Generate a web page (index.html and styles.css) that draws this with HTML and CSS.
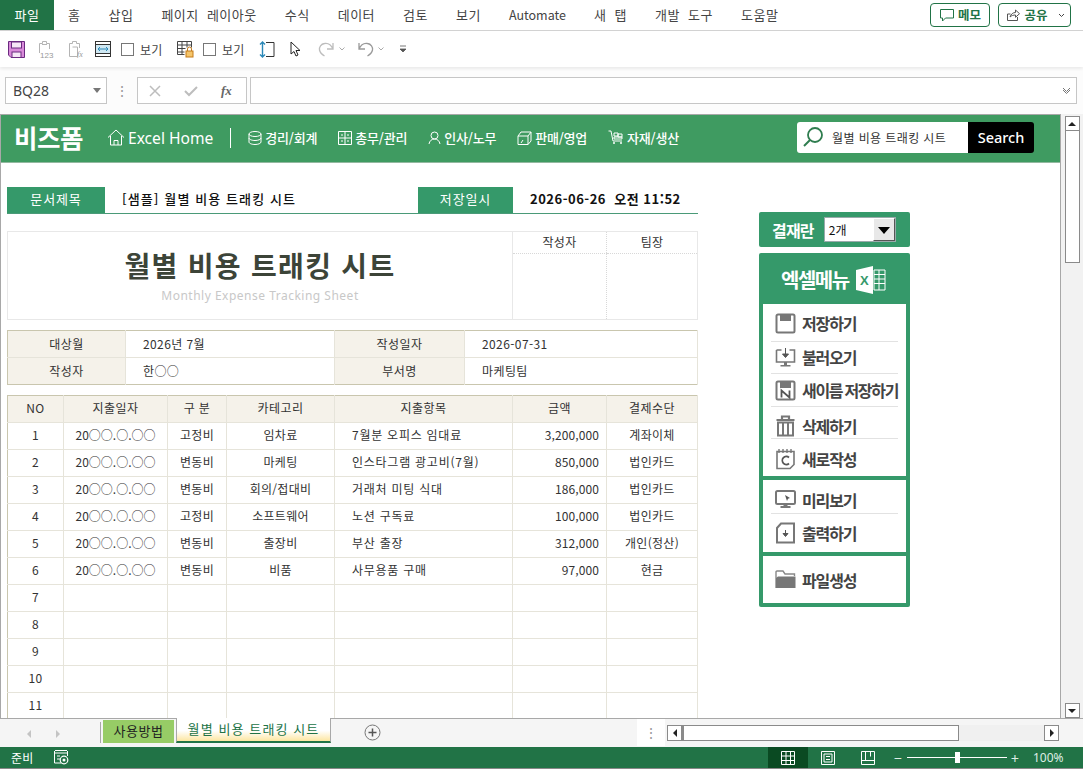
FILE: index.html
```html
<!DOCTYPE html>
<html lang="ko">
<head>
<meta charset="utf-8">
<title>월별 비용 트래킹 시트</title>
<link rel="stylesheet" href="styles.css">
</head>
<body>
<div class="app">
  <nav class="ribbon">
    <span class="tab tab-file">파일</span>
    <span class="tab">홈</span>
    <span class="tab">삽입</span>
    <span class="tab">페이지 레이아웃</span>
    <span class="tab">수식</span>
    <span class="tab">데이터</span>
    <span class="tab">검토</span>
    <span class="tab">보기</span>
    <span class="tab tab-en">Automate</span>
    <span class="tab">새 탭</span>
    <span class="tab">개발 도구</span>
    <span class="tab">도움말</span>
    <span class="ribbon-actions">
      <span class="act act-memo"><svg width="16" height="14" viewBox="0 0 16 14"><path d="M1.5 1.5h13v8.500h-8l-3 3v-3h-2z" fill="none" stroke="#217346"/></svg>메모</span>
      <span class="act act-share"><svg width="15" height="14" viewBox="0 0 15 14"><path d="M1.5 6v6.500h10V9M1.500 6h3M4 9c1-3 3-4.500 5.500-4.500V2l4 3.700-4 3.600V7C7.500 7 5.500 7.500 4 9z" fill="none" stroke="#555"/></svg>공유<svg class="act-chev" width="7" height="5" viewBox="0 0 7 5"><path d="M1 1l2.500 2.500L6 1" fill="none" stroke="#444"/></svg></span>
    </span>
  </nav>

  <div class="qat">
    <svg class="q q-save" width="17" height="17" viewBox="0 0 17 17"><path d="M.5.500h16v16H3l-2.500-2.500z" fill="#d98ad9" stroke="#6a2a80"/><rect x="3.500" y="1" width="10" height="6" fill="#f6e6f6" stroke="#6a2a80"/><rect x="4" y="11" width="9" height="5.500" fill="#f6e6f6" stroke="#6a2a80"/></svg>
    <svg class="q q-p1" width="16" height="18" viewBox="0 0 16 18"><path d="M1.500 13V3.500h3V1.500h4v2h3V9M4 4.500h5" fill="none" stroke="#b4b4b4"/><text x="2" y="17.500" class="q-mini">123</text></svg>
    <svg class="q q-p2" width="16" height="18" viewBox="0 0 16 18"><path d="M1.500 16.500V3.500h3V1.500h4v2h3V8M4.500 7h5v9.500h-8" fill="none" stroke="#b4b4b4"/><text x="9" y="17" class="q-mini q-fx">fx</text></svg>
    <svg class="q q-col" width="16" height="16" viewBox="0 0 16 16"><rect x=".5" y=".5" width="15" height="15" fill="#fff" stroke="#333"/><path d="M0 3.500h16M0 12.500h16" stroke="#333"/><rect x="1" y="4" width="14" height="8" fill="#cfe8f3"/><path d="M3 8h10M3 8l2-2M3 8l2 2M13 8l-2-2M13 8l-2 2" stroke="#2b88b8" fill="none"/></svg>
    <span class="chk chk-1"></span><span class="q-label">보기</span>
    <svg class="q q-lock" width="17" height="18" viewBox="0 0 17 18"><path d="M.5 1.500h14v6M.5 1.500v13h7M.5 5h14M.5 8.500h8M.5 12h7M5 1.500v13M10 1.500v6" fill="none" stroke="#444"/><rect x="9" y="11" width="7" height="6" fill="#f5c56a" stroke="#c47a18"/><path d="M10.500 11V9a2 2 0 0 1 4 0v2" fill="none" stroke="#c47a18"/></svg>
    <span class="chk chk-2"></span><span class="q-label">보기</span>
    <svg class="q q-row" width="16" height="17" viewBox="0 0 16 17"><path d="M7 1.500h8v14H7" fill="none" stroke="#333"/><path d="M3.500 1v15M1 3.500l2.500-2.500 2.500 2.500M1 13.500l2.500 2.500 2.500-2.500" fill="none" stroke="#2b88b8" stroke-width="1.400"/></svg>
    <svg class="q q-cur" width="11" height="16" viewBox="0 0 11 16"><path d="M1 1v12l3-2.500 2 4.500 2-1-2-4.500h4z" fill="#fff" stroke="#222"/></svg>
    <svg class="q q-redo" width="17" height="17" viewBox="0 0 17 17"><path d="M15 2v6H9M15 8C13 3.500 9.500 2 6.500 2.500 3 3 1 6 1.500 9c.5 2.500 2.500 4.500 5 6" fill="none" stroke="#bdbdbd" stroke-width="1.300"/></svg>
    <svg class="q q-c1" width="6" height="4" viewBox="0 0 6 4"><path d="M.5.500L3 3 5.500.500" fill="none" stroke="#aaa"/></svg>
    <svg class="q q-undo" width="17" height="17" viewBox="0 0 17 17"><path d="M2 2v6h6M2 8C4 3.500 7.500 2 10.500 2.500 14 3 16 6 15.500 9c-.5 2.500-2.500 4.500-5 6" fill="none" stroke="#9a9a9a" stroke-width="1.300"/></svg>
    <svg class="q q-c2" width="6" height="4" viewBox="0 0 6 4"><path d="M.5.500L3 3 5.500.500" fill="none" stroke="#aaa"/></svg>
    <svg class="q q-more" width="8" height="8" viewBox="0 0 8 8"><path d="M1 1h6M1 4l3 3 3-3z" fill="#555" stroke="#555" stroke-width=".8"/></svg>
  </div>

  <div class="formula">
    <div class="namebox"><span>BQ28</span><i class="tri"></i></div>
    <span class="dots">⋮</span>
    <div class="fbtns">
      <svg width="12" height="12" viewBox="0 0 12 12"><path d="M1 1l10 10M11 1L1 11" stroke="#bdbdbd" stroke-width="1.500"/></svg>
      <svg width="14" height="12" viewBox="0 0 14 12"><path d="M1 6l4 4 8-8" fill="none" stroke="#bdbdbd" stroke-width="2"/></svg>
      <span class="fx">fx</span>
    </div>
    <div class="finput"><svg width="9" height="7" viewBox="0 0 9 7"><path d="M1 1l3.500 3.500L8 1M1 3l3.500 3.500L8 3" fill="none" stroke="#777"/></svg></div>
  </div>

  <div class="workspace">
    <div class="sheet">
      <header class="banner">
        <span class="logo">비즈폼</span>
        <span class="b-home"><svg width="18" height="17" viewBox="0 0 18 17"><path d="M1 8.500L9 1l8 7.500M3.500 7v9h11V7M7 16v-4.500h4V16" fill="none" stroke="#fff"/></svg>Excel Home</span>
        <span class="b-sep"></span>
        <span class="b-item b-wide"><svg width="14" height="14" viewBox="0 0 14 14"><ellipse cx="7" cy="3" rx="6" ry="2.500" fill="none" stroke="#fff"/><path d="M1 3v8c0 1.500 3 2.500 6 2.500s6-1 6-2.500V3M1 7c0 1.500 3 2.500 6 2.500S13 8.500 13 7" fill="none" stroke="#fff"/></svg>경리/회계</span>
        <span class="b-item b-wide"><svg width="14" height="14" viewBox="0 0 14 14"><path d="M.5.500h13v13H.5zM7 .500v13M.5 7h13M3 4h2M9 4h2M3 10h2M9 10h2" fill="none" stroke="#fff"/></svg>총무/관리</span>
        <span class="b-item b-wide"><svg width="13" height="14" viewBox="0 0 13 14"><circle cx="6.500" cy="4.500" r="3.500" fill="none" stroke="#fff"/><path d="M1 13c.5-3 2.500-5 5.500-5s5 2 5.500 5" fill="none" stroke="#fff"/></svg>인사/노무</span>
        <span class="b-item b-wide"><svg width="15" height="14" viewBox="0 0 15 14"><path d="M1 5h10v8.500H1zM1 5l3-4h10v9l-3 3.500M11 5l3-4M6 9l-2 3" fill="none" stroke="#fff"/></svg>판매/영업</span>
        <span class="b-item"><svg width="16" height="15" viewBox="0 0 16 15"><path d="M.5 1H3l2 10h9M6 3h4v3H6zM10 4h4v3h-4zM6 7h8v2H6z" fill="none" stroke="#fff"/><circle cx="6" cy="13" r="1" fill="#fff"/><circle cx="13" cy="13" r="1" fill="#fff"/></svg>자재/생산</span>
        <div class="search">
          <div class="search-box"><svg width="22" height="22" viewBox="0 0 22 22"><circle cx="13" cy="9" r="7" fill="none" stroke="#2f7d4f" stroke-width="1.800"/><path d="M8 14l-6 6" stroke="#2f7d4f" stroke-width="2"/></svg><span>월별 비용 트래킹 시트</span></div>
          <div class="search-btn">Search</div>
        </div>
      </header>

      <div class="sheet-body">
        <main class="doc">
          <div class="docbar">
            <span class="doc-label">문서제목</span>
            <span class="doc-title">[샘플] 월별 비용 트래킹 시트</span>
            <span class="doc-label doc-label-2">저장일시</span>
            <span class="doc-date">2026-06-26&nbsp; 오전 11:52</span>
          </div>

          <table class="titlebox">
            <colgroup><col class="c-a"><col class="c-g"><col class="c-h"></colgroup>
            <tr class="t-head">
              <td rowspan="2" class="t-main">
                <div class="t-title">월별 비용 트래킹 시트</div>
                <div class="t-sub">Monthly Expense Tracking Sheet</div>
              </td>
              <td class="sign">작성자</td>
              <td class="sign">팀장</td>
            </tr>
            <tr class="t-sign"><td></td><td></td></tr>
          </table>

          <table class="info">
            <colgroup><col class="i-1"><col class="i-2"><col class="i-3"><col></colgroup>
            <tr><th>대상월</th><td>2026년 7월</td><th>작성일자</th><td>2026-07-31</td></tr>
            <tr><th>작성자</th><td>한○○</td><th>부서명</th><td>마케팅팀</td></tr>
          </table>

          <table class="list">
            <colgroup><col class="l-1"><col class="l-2"><col class="l-3"><col class="l-4"><col class="l-5"><col class="l-6"><col></colgroup>
            <thead>
              <tr><th>NO</th><th>지출일자</th><th>구 분</th><th>카테고리</th><th>지출항목</th><th>금액</th><th>결제수단</th></tr>
            </thead>
            <tbody>
              <tr><td>1</td><td>20○○.○.○○</td><td>고정비</td><td>임차료</td><td class="item">7월분 오피스 임대료</td><td class="amt">3,200,000</td><td>계좌이체</td></tr>
              <tr><td>2</td><td>20○○.○.○○</td><td>변동비</td><td>마케팅</td><td class="item">인스타그램 광고비(7월)</td><td class="amt">850,000</td><td>법인카드</td></tr>
              <tr><td>3</td><td>20○○.○.○○</td><td>변동비</td><td>회의/접대비</td><td class="item">거래처 미팅 식대</td><td class="amt">186,000</td><td>법인카드</td></tr>
              <tr><td>4</td><td>20○○.○.○○</td><td>고정비</td><td>소프트웨어</td><td class="item">노션 구독료</td><td class="amt">100,000</td><td>법인카드</td></tr>
              <tr><td>5</td><td>20○○.○.○○</td><td>변동비</td><td>출장비</td><td class="item">부산 출장</td><td class="amt">312,000</td><td>개인(정산)</td></tr>
              <tr><td>6</td><td>20○○.○.○○</td><td>변동비</td><td>비품</td><td class="item">사무용품 구매</td><td class="amt">97,000</td><td>현금</td></tr>
              <tr><td>7</td><td></td><td></td><td></td><td></td><td></td><td></td></tr>
              <tr><td>8</td><td></td><td></td><td></td><td></td><td></td><td></td></tr>
              <tr><td>9</td><td></td><td></td><td></td><td></td><td></td><td></td></tr>
              <tr><td>10</td><td></td><td></td><td></td><td></td><td></td><td></td></tr>
              <tr><td>11</td><td></td><td></td><td></td><td></td><td></td><td></td></tr>
            </tbody>
          </table>
        </main>

        <aside class="side">
          <div class="approve">
            <span>결재란</span>
            <div class="combo"><span>2개</span><i class="combo-btn"></i></div>
          </div>
          <div class="menu">
            <div class="menu-head">
              <span>엑셀메뉴</span>
              <svg width="30" height="28" viewBox="0 0 30 28"><path d="M0 4L17 0v28L0 24z" fill="#fff"/><path d="M18 4h11v20H18z" fill="none" stroke="#fff"/><path d="M18 8.500h11M18 13h11M18 17.500h11M23 4v20" stroke="#fff" fill="none"/><text x="4" y="19" class="xl">X</text></svg>
            </div>
            <div class="panel panel-a">
              <div class="mi"><svg width="21" height="21" viewBox="0 0 21 21"><path d="M1.500 3a1.500 1.500 0 0 1 1.500-1.500h15A1.500 1.500 0 0 1 19.500 3v15a1.500 1.500 0 0 1-1.500 1.500H3A1.500 1.500 0 0 1 1.500 18z" fill="none" stroke="#777" stroke-width="2"/><rect x="5" y="2" width="11" height="6" fill="#777"/></svg>저장하기</div>
              <div class="mi"><svg width="21" height="21" viewBox="0 0 21 21"><path d="M1.500 3h5M14.500 3h5v12h-18V3" fill="none" stroke="#777" stroke-width="1.600"/><path d="M10.500 1v9M7.500 7l3 3.500 3-3.500z" fill="#555" stroke="#555"/><path d="M9 15v3H5.500v1.500h10V18H12v-3z" fill="#777"/></svg>불러오기</div>
              <div class="mi"><svg width="21" height="21" viewBox="0 0 21 21"><rect x="1.500" y="1.500" width="18" height="18" rx="1.500" fill="none" stroke="#777" stroke-width="2"/><rect x="5" y="2" width="11" height="6" fill="#777"/><path d="M6.500 17.500v-7l8 7v-7" fill="none" stroke="#555" stroke-width="1.800"/></svg><span class="mi-long">새이름 저장하기</span></div>
              <div class="mi"><svg width="21" height="22" viewBox="0 0 21 22"><path d="M7 4V1.500h7V4M1.500 5h18" fill="none" stroke="#777" stroke-width="2.200"/><rect x="3" y="7.500" width="15" height="13" fill="none" stroke="#777" stroke-width="2"/><path d="M8 8v12M13 8v12" stroke="#777" stroke-width="2"/></svg>삭제하기</div>
              <div class="mi"><svg width="21" height="22" viewBox="0 0 21 22"><path d="M2 3.500h17v13l-4 4H2z" fill="none" stroke="#777" stroke-width="1.600"/><path d="M4 1v4M8 1v4M12 1v4M16 1v4" stroke="#777" stroke-width="1.400"/><path d="M14 9.500a4 4 0 1 0 0 6" fill="none" stroke="#555" stroke-width="1.800"/></svg>새로작성</div>
            </div>
            <div class="panel panel-b">
              <div class="mi"><svg width="21" height="19" viewBox="0 0 21 19"><rect x="1" y="1" width="19" height="13" rx="1.500" fill="none" stroke="#777" stroke-width="2"/><path d="M10 5l5 3-2 .8L12 11z" fill="#555"/><path d="M8.500 14h4v2h3v2h-10v-2h3z" fill="#777"/></svg>미리보기</div>
              <div class="mi"><svg width="21" height="22" viewBox="0 0 21 22"><path d="M6 1.500h13v19H2V6z" fill="none" stroke="#777" stroke-width="2"/><path d="M10.500 8v6M8 11.500l2.500 3 2.500-3z" fill="#555" stroke="#555"/></svg>출력하기</div>
            </div>
            <div class="panel panel-c">
              <div class="mi"><svg width="21" height="19" viewBox="0 0 21 19"><path d="M1 18V2a1 1 0 0 1 1-1h6l2 3h9.500v2" fill="none" stroke="#888" stroke-width="1.400"/><path d="M3 6.500h17.500V18H1V8z" fill="#777"/></svg>파일생성</div>
            </div>
          </div>
        </aside>
      </div>
    </div>

    <div class="vscroll">
      <span class="sb-btn"><i class="arr-up"></i></span>
      <span class="sb-thumb"></span>
      <span class="sb-track"></span>
      <span class="sb-btn"><i class="arr-down"></i></span>
    </div>
  </div>

  <div class="tabsbar">
    <i class="nav-l"></i><i class="nav-r"></i>
    <span class="tb-line"></span>
    <span class="stab stab-use">사용방법</span>
    <span class="stab stab-cur">월별 비용 트래킹 시트</span>
    <svg class="addsheet" width="17" height="17" viewBox="0 0 17 17"><circle cx="8.500" cy="8.500" r="7.500" fill="none" stroke="#777"/><path d="M8.500 4.500v8M4.500 8.500h8" stroke="#555" stroke-width="1.500"/></svg>
    <span class="tb-gap"><span class="tb-dots">⋮</span></span>
    <div class="hscroll">
      <span class="hs-btn"><i class="arr-left"></i></span>
      <span class="hs-thumb"></span>
      <span class="hs-track"></span>
      <span class="hs-btn"><i class="arr-right"></i></span>
    </div>
  </div>

  <footer class="status">
    <span class="st-ready">준비</span>
    <svg class="st-macro" width="15" height="15" viewBox="0 0 15 15"><path d="M1 .500h12M.500 1v12h7M1 3h12M13.500 1v5M3 6h3M3 9h3" fill="none" stroke="#fff"/><circle cx="10" cy="10" r="3.800" fill="none" stroke="#fff" stroke-width="1.200"/><circle cx="10" cy="10" r="1.500" fill="#fff"/></svg>
    <div class="views">
      <span class="view view-on"><svg width="14" height="14" viewBox="0 0 14 14"><path d="M.5.500h13v13H.5zM.5 5h13M.5 9.500h13M5 .500v13M9.500 .500v13" fill="none" stroke="#fff"/></svg></span>
      <span class="view"><svg width="14" height="14" viewBox="0 0 14 14"><path d="M.5.500h13v13H.5zM3 3h8v8H3zM5 5.500h4M5 8.500h4" fill="none" stroke="#fff"/></svg></span>
      <span class="view"><svg width="14" height="14" viewBox="0 0 14 14"><path d="M.5.500h13v13H.5zM.5 9.500h13M4.500 .500v9M9.500 .500v5" fill="none" stroke="#fff"/></svg></span>
    </div>
    <div class="zoom">
      <span class="z-sign">−</span>
      <span class="z-track"><i class="z-knob"></i></span>
      <span class="z-sign">+</span>
      <span class="z-val">100%</span>
    </div>
  </footer>
</div>
</body>
</html>
```

FILE: styles.css
```css
* { box-sizing: border-box; }
html, body { margin: 0; height: 100%; overflow: hidden; background: #fff; }
body { font-family: "Noto Sans CJK KR", "Liberation Sans", sans-serif; color: #333; }
i { display: block; font-style: normal; }
svg { display: block; flex: none; }

.app { width: 1083px; height: 769px; display: flex; flex-direction: column; }

/* ribbon tabs */
.ribbon { height: 31px; display: flex; align-items: stretch; font-size: 13px; line-height: 30px; color: #444; border-bottom: 1px solid #d2d2d2; flex: none; }
.tab { padding: 0 14px; white-space: nowrap; letter-spacing: .5px; word-spacing: 4px; }
.tab-en { letter-spacing: 0; font-size: 12.5px; }
.tab-file { width: 54px; padding: 0; text-align: center; background: #217346; color: #fff; }
.ribbon-actions { margin-left: auto; display: flex; gap: 8px; padding: 3px 12px 4px 0; }
.act { display: flex; align-items: center; justify-content: center; height: 24px; border: 1px solid #217346; border-radius: 4px; font-size: 12.5px; font-weight: 700; color: #217346; gap: 3px; }
.act-memo { width: 60px; }
.act-share { width: 73px; padding-left: 2px; }
.act-chev { margin-left: 7px; }

/* quick access */
.qat { height: 36px; flex: none; display: flex; align-items: center; background: #fff; box-shadow: 0 2px 3px rgba(0,0,0,.07); position: relative; font-size: 12px; color: #444; }
.q-save { margin-left: 8px; }
.q-p1 { margin-left: 13px; }
.q-p2 { margin-left: 14px; }
.q-col { margin-left: 11px; }
.q-lock { margin-left: 13px; }
.q-row { margin-left: 13px; }
.q-cur { margin-left: 15px; }
.q-redo { margin-left: 17px; }
.q-c1 { margin-left: 4px; }
.q-undo { margin-left: 12px; }
.q-c2 { margin-left: 4px; }
.q-more { margin-left: 15px; }
.q-mini { font: 8px "Liberation Sans", sans-serif; fill: #999; }
.q-fx { font: italic 8px "Liberation Serif", serif; }
.chk { width: 13px; height: 13px; border: 1px solid #777; background: #fff; flex: none; }
.chk-1 { margin-left: 10px; }
.chk-2 { margin-left: 9px; }
.q-label { margin-left: 6px; width: 24px; white-space: nowrap; letter-spacing: .3px; }

/* formula bar */
.formula { height: 47px; flex: none; display: flex; align-items: flex-start; padding: 10px 6px 0 5px; background: #fcfcfc; }
.namebox { width: 102px; height: 27px; border: 1px solid #c6c6c6; background: #fff; display: flex; align-items: center; justify-content: space-between; padding: 0 5px 0 7px; font-size: 14px; color: #444; font-family: "Noto Sans", sans-serif; }
.tri { width: 0; height: 0; border: 4px solid transparent; border-top: 5px solid #777; border-bottom: 0; }
.dots { width: 30px; text-align: center; color: #999; font-size: 14px; line-height: 27px; }
.fbtns { width: 110px; height: 27px; border: 1px solid #c6c6c6; background: #fff; display: flex; align-items: center; gap: 23px; padding-left: 11px; }
.fx { font: italic 700 13px "Liberation Serif", serif; color: #666; }
.finput { flex: 1; height: 27px; margin-left: 3px; border: 1px solid #c6c6c6; background: #fff; display: flex; align-items: center; justify-content: flex-end; padding-right: 5px; }

/* workspace */
.workspace { flex: 1; min-height: 0; display: flex; }
.sheet { width: 1061px; height: 100%; border: 1px solid #a8a8a8; border-width: 1px 1px 0 1px; overflow: hidden; background: #fff; }
.banner { height: 48px; background: #3f9b61; border-bottom: 1px solid #93b8a0; display: flex; align-items: center; color: #fff; padding: 0 26px 2px 0; }
.logo { font-size: 25.5px; font-weight: 700; margin-left: 13px; letter-spacing: -.4px; width: 71px; white-space: nowrap; margin-bottom: 2px; }
.b-home { display: flex; align-items: center; gap: 3px; margin-left: 22px; font-size: 15.6px; font-family: "Noto Sans", sans-serif; white-space: nowrap; }
.b-sep { width: 1px; height: 20px; background: #fff; margin: 0 17px; }
.b-item { display: flex; align-items: center; gap: 3px; font-size: 13px; font-weight: 500; letter-spacing: -.2px; margin-right: 20px; white-space: nowrap; }
.b-wide { margin-right: 21px; }
.search { margin-left: auto; display: flex; height: 31px; margin-bottom: 1px; }
.search-box { width: 171px; background: #fff; color: #333; border-radius: 3px 0 0 3px; display: flex; align-items: center; gap: 8px; padding-left: 5px; font-size: 12px; white-space: nowrap; letter-spacing: .4px; }
.search-btn { width: 66px; background: #000; color: #fff; font: 500 14.5px/31px "Noto Sans", sans-serif; text-align: center; border-radius: 0 3px 3px 0; }

.sheet-body { display: flex; align-items: flex-start; padding-left: 6px; }
.doc { width: 691px; flex: none; margin-top: 24px; }
table { border-collapse: collapse; table-layout: fixed; width: 691px; }
td, th { padding: 0; font-weight: 400; }

.docbar { display: flex; align-items: stretch; height: 27px; border-bottom: 1px solid #4a9a78; font-size: 13px; line-height: 24px; }
.doc-label { width: 98px; background: #35996a; color: #fff; text-align: center; letter-spacing: .9px; }
.doc-label-2 { width: 95px; }
.doc-title { width: 313px; padding-left: 17px; font-weight: 500; color: #111; letter-spacing: 1.1px; white-space: nowrap; }
.doc-date { padding-left: 17px; font-weight: 700; color: #111; letter-spacing: .5px; white-space: nowrap; }

.titlebox { margin-top: 17px; border: 1px solid #e8e8e8; height: 89px; }
.c-a { width: 505px; }
.c-g { width: 94px; }
.t-main { text-align: center; border-right: 1px solid #e8e8e8; vertical-align: top; }
.t-title { font-size: 28px; font-weight: 700; color: #3c4438; line-height: 36px; margin-top: 15px; letter-spacing: 1.3px; }
.t-sub { font: 12px/18px "Noto Sans", sans-serif; color: #c8c8c8; margin-top: 4px; letter-spacing: .5px; }
.t-head { height: 22px; }
.sign { text-align: center; font-size: 12px; line-height: 20px; vertical-align: top; border-bottom: 1px dotted #d8d8d8; color: #333; letter-spacing: .3px; }
.t-head .sign + .sign, .t-sign td + td { border-left: 1px dotted #d8d8d8; }

.info { margin-top: 10px; border: 1px solid #c9c6ae; font-size: 12px; height: 55px; }
.i-1 { width: 118px; }
.i-2 { width: 209px; }
.i-3 { width: 130px; }
.info tr + tr { border-top: 1px solid #e6e4da; }
.info th { background: #f5f2ea; border-right: 1px solid #e6e4da; letter-spacing: .4px; padding-bottom: 2px; }
.info td { padding: 0 0 2px 17px; border-right: 1px solid #e6e4da; letter-spacing: .4px; }

.list { margin-top: 10px; border: 1px solid #c9c6ae; font-size: 12px; }
.l-1 { width: 56px; }
.l-2 { width: 104px; }
.l-3 { width: 59px; }
.l-4 { width: 108px; }
.l-5 { width: 178px; }
.l-6 { width: 94px; }
.list tr { height: 27px; border-bottom: 1px solid #e6e4da; }
.list th { background: #f5f2ea; border-right: 1px solid #e6e4da; letter-spacing: .4px; padding-bottom: 3px; }
.list td { text-align: center; border-right: 1px solid #e6e4da; letter-spacing: .3px; padding-bottom: 3px; }
.list td:nth-child(2) { letter-spacing: 0; }
.list td.item { text-align: left; padding-left: 17px; letter-spacing: .75px; }
.list td.amt { text-align: right; padding-right: 7px; letter-spacing: .1px; }

/* side menu */
.side { width: 151px; margin-left: 61px; margin-top: 49px; flex: none; }
.approve { height: 35px; background: #35996a; border-radius: 2px; display: flex; align-items: center; gap: 10px; padding-left: 13px; color: #fff; font-size: 16px; font-weight: 700; letter-spacing: -.8px; }
.combo { width: 72px; height: 25px; background: #fff; border: 1px solid #9aa; display: flex; align-items: center; justify-content: space-between; font-size: 12px; font-weight: 400; color: #111; padding: 0 0 0 4px; letter-spacing: 0; }
.combo-btn { width: 22px; height: 23px; background: #e8e8e8; border: 1px solid; border-color: #fff #555 #555 #fff; position: relative; }
.combo-btn::after { content: ""; position: absolute; left: 4px; top: 8px; border: 6px solid transparent; border-top: 7px solid #000; border-bottom: 0; }
.menu { margin-top: 6px; height: 354px; background: #35996a; border-radius: 2px; padding: 0 4px 4px; display: flex; flex-direction: column; gap: 4px; }
.menu-head { height: 47px; display: flex; align-items: center; gap: 7px; padding: 6px 0 0 18px; color: #fff; font-size: 20px; font-weight: 700; letter-spacing: -1.5px; }
.xl { font: 700 13px "Liberation Sans", sans-serif; fill: #35996a; }
.panel { background: #fff; padding: 0 8px; }
.panel-a { height: 172px; }
.panel-b { height: 72px; }
.panel-c { height: 47px; display: flex; align-items: center; }
.panel-c .mi { border: 0; }
.mi { display: flex; align-items: center; gap: 6px; padding-left: 4px; border-bottom: 1px solid #e2e2e2; font-size: 16px; font-weight: 700; color: #444; letter-spacing: -1.1px; white-space: nowrap; }
.mi:last-child { border-bottom: 0; }
.mi-long { word-spacing: -1px; letter-spacing: -1.3px; }
.panel-a .mi:nth-child(1) { height: 38px; padding-top: 1px; }
.panel-a .mi:nth-child(2) { height: 32px; padding-bottom: 1px; }
.panel-a .mi:nth-child(3) { height: 33px; }
.panel-a .mi:nth-child(4) { height: 32px; padding-top: 7px; }
.panel-a .mi:nth-child(5) { height: 37px; padding-top: 2px; }
.panel-b .mi:nth-child(1) { height: 34px; padding-top: 6px; }
.panel-b .mi:nth-child(2) { height: 38px; }

/* vertical scrollbar */
.vscroll { flex: 1; background: #f2f2f2; display: flex; flex-direction: column; align-items: center; padding: 2px 0 0; }
.sb-btn { width: 15px; height: 15px; background: #fff; border: 1px solid #8a8a8a; display: flex; align-items: center; justify-content: center; flex: none; }
.sb-thumb { width: 15px; height: 132px; background: #fff; border: 1px solid #8a8a8a; border-top: 0; flex: none; }
.sb-track { flex: 1; }
.arr-up { border: 4px solid transparent; border-bottom: 4px solid #222; border-top: 0; }
.arr-down { border: 4px solid transparent; border-top: 4px solid #222; border-bottom: 0; }
.arr-left { border: 4px solid transparent; border-right: 4px solid #222; border-left: 0; }
.arr-right { border: 4px solid transparent; border-left: 4px solid #222; border-right: 0; }

/* sheet tabs */
.tabsbar { height: 29px; flex: none; background: #f5f5f5; border-top: 1px solid #a8a8a8; display: flex; align-items: flex-start; position: relative; }
.nav-l { margin: 11px 0 0 27px; border: 4px solid transparent; border-right: 4px solid #c4c4c4; border-left: 0; }
.nav-r { margin: 11px 0 0 25px; border: 4px solid transparent; border-left: 4px solid #c4c4c4; border-right: 0; }
.tb-line { width: 1px; height: 21px; background: #a8a8a8; margin: 3px 2px 0 40px; }
.stab { font-size: 13px; height: 24px; line-height: 22px; text-align: center; white-space: nowrap; letter-spacing: .6px; }
.stab-use { width: 71px; height: 23px; margin: 1px 2px 0 0; background: #97cc66; color: #222; }
.stab-cur { width: 155px; height: 25px; margin-top: -1px; background: linear-gradient(#fff 55%, #fde6a0); color: #217346; border: solid #a8a8a8; border-width: 0 1px 2px 1px; border-bottom-color: #217346; letter-spacing: 1.1px; }
.addsheet { margin: 5px 0 0 33px; }
.tb-gap { width: 28px; margin-left: 256px; height: 27px; background: #fff; text-align: center; }
.tb-dots { color: #999; font-size: 14px; line-height: 26px; }
.hscroll { width: 392px; margin-left: 2px; height: 16px; margin-top: 6px; background: #f0f0f0; display: flex; }
.hs-btn { width: 15px; height: 16px; background: #fff; border: 1px solid #8a8a8a; display: flex; align-items: center; justify-content: center; flex: none; }
.hs-thumb { width: 277px; border: 1px solid #8a8a8a; border-left: 2px solid #8a8a8a; background: #fff; flex: none; }
.hs-track { flex: 1; }

/* status bar */
.status { height: 22px; flex: none; background: #217346; border-bottom: 1px solid #888; color: #fff; display: flex; align-items: center; font-size: 12px; }
.st-ready { margin-left: 11px; letter-spacing: .3px; }
.st-macro { margin-left: 20px; }
.views { margin-left: auto; display: flex; height: 100%; }
.view { width: 40px; display: flex; align-items: center; justify-content: center; }
.view-on { background: #0a4a22; }
.zoom { display: flex; align-items: center; width: 195px; color: #dfeee5; }
.z-sign { width: 14px; text-align: center; font-size: 14px; line-height: 14px; margin-left: 3px; }
.z-track { width: 100px; height: 1px; background: #fff; position: relative; margin-left: 2px; }
.z-knob { position: absolute; left: 48px; top: -5px; width: 5px; height: 11px; background: #fff; }
.z-track + .z-sign { margin-left: 1px; }
.z-val { margin-left: 11px; font-family: "Noto Sans", sans-serif; }
```
